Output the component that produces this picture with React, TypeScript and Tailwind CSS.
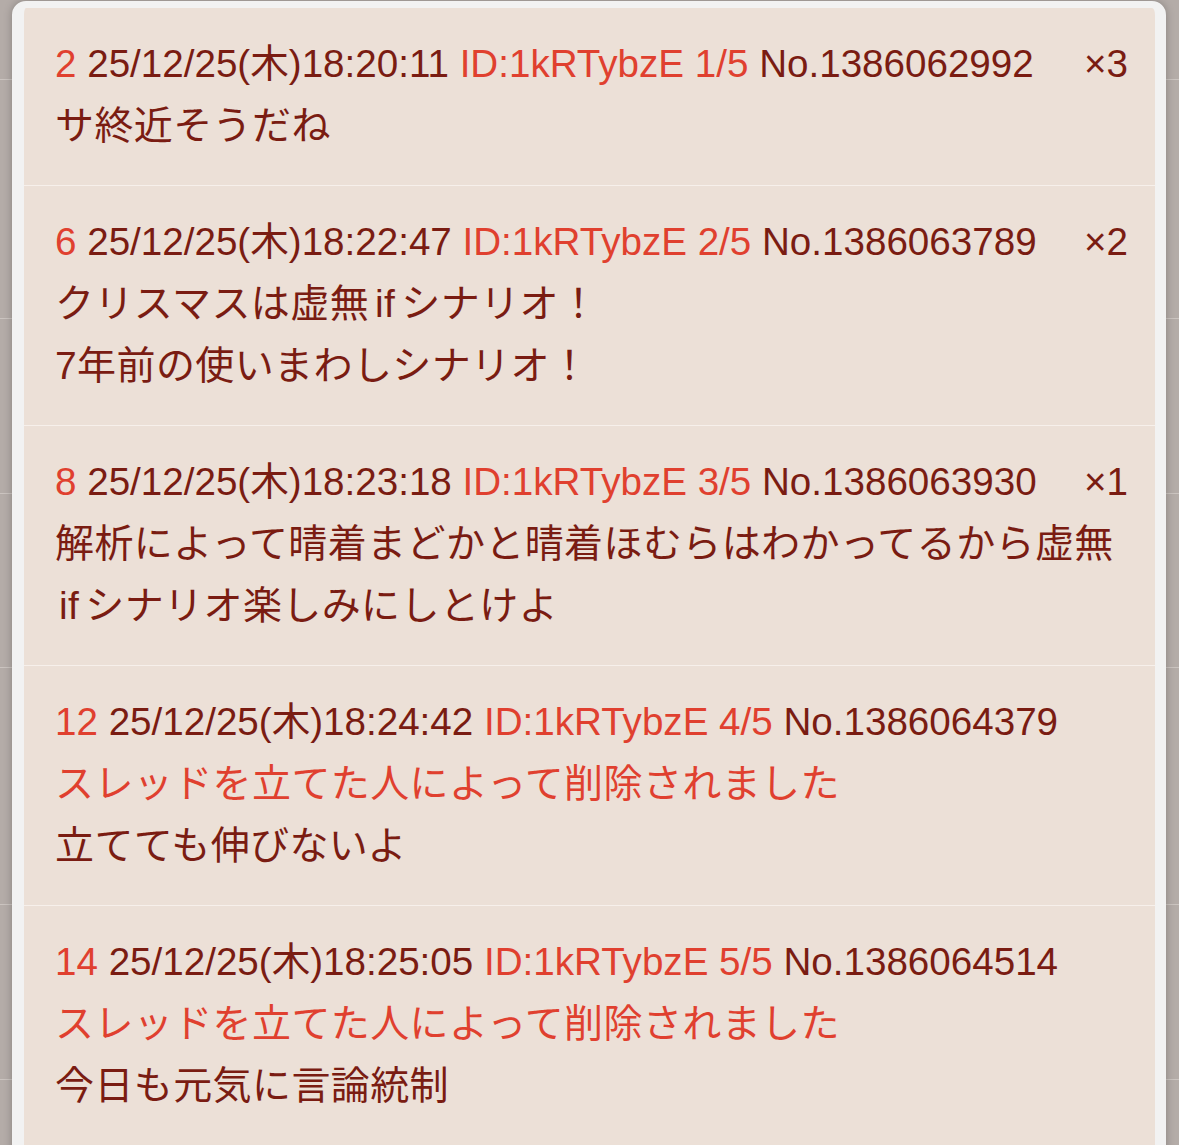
import React from "react";

type Post = {
  num: string;
  date: string;
  count: string;
  no: string;
  refs?: string;
  deleted?: boolean;
  lines: React.ReactNode[];
};

const If = () => <span className="mx-[6px]">if</span>;

const posts: Post[] = [
  { num: "2", date: "25/12/25(木)18:20:11", count: "1/5", no: "No.1386062992", refs: "×3", lines: ["サ終近そうだね"] },
  {
    num: "6",
    date: "25/12/25(木)18:22:47",
    count: "2/5",
    no: "No.1386063789",
    refs: "×2",
    lines: [
      <>クリスマスは虚無<If />シナリオ！</>,
      "7年前の使いまわしシナリオ！",
    ],
  },
  {
    num: "8",
    date: "25/12/25(木)18:23:18",
    count: "3/5",
    no: "No.1386063930",
    refs: "×1",
    lines: [
      "解析によって晴着まどかと晴着ほむらはわかってるから虚無",
      <><span className="ml-[4px] mr-[6px]">if</span>シナリオ楽しみにしとけよ</>,
    ],
  },
  { num: "12", date: "25/12/25(木)18:24:42", count: "4/5", no: "No.1386064379", deleted: true, lines: ["立てても伸びないよ"] },
  { num: "14", date: "25/12/25(木)18:25:05", count: "5/5", no: "No.1386064514", deleted: true, lines: ["今日も元気に言論統制"] },
];

const bgRows = [80, 239, 175, 174, 237, 175, 200];

export default function App() {
  return (
    <div
      className="relative h-[1145px] w-[1179px] overflow-hidden bg-[#b4aca8]"
      style={{ fontFamily: '"Liberation Sans", "Noto Sans CJK JP", sans-serif' }}
    >
      <div className="flex flex-col">
        {bgRows.map((h, i) => (
          <div key={i} className="border-b border-[#cbc4c0]" style={{ height: h }} />
        ))}
      </div>
      <div className="absolute left-[12px] top-[1px] w-[1154px] rounded-t-[14px] border-x-[12px] border-t-[7px] border-b-[12px] border-[#f2f2f2] border-r-[11px] bg-[#ece0d7] shadow-[0_0_8px_rgba(0,0,0,0.25)]">
        {posts.map((p, i) => (
          <div
            key={i}
            className={`pl-[31px] pr-[27px] pt-[25px] pb-[28px] text-[39px] leading-[62px] text-[#7a1c12] ${i < posts.length - 1 ? "border-b border-[#f7f0eb]" : ""}`}
          >
            <div className="flex justify-between whitespace-nowrap text-[38.6px]">
              <div>
                <span className="text-[#e0402f]">{p.num}</span>{" "}
                <span>{p.date}</span>{" "}
                <span className="text-[#e0402f]">ID:1kRTybzE {p.count}</span>{" "}
                <span>{p.no}</span>
              </div>
              {p.refs && <div>{p.refs}</div>}
            </div>
            {p.deleted && (
              <div className="whitespace-nowrap tracking-[0.4px] text-[#e0402f]">スレッドを立てた人によって削除されました</div>
            )}
            {p.lines.map((l, j) => (
              <div key={j} className="whitespace-nowrap tracking-[0.4px]">{l}</div>
            ))}
          </div>
        ))}
      </div>
    </div>
  );
}
